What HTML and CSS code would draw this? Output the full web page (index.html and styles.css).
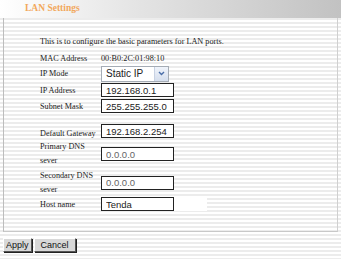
FILE: index.html
```html
<!DOCTYPE html>
<html lang="en">
<head>
    <meta charset="UTF-8">
    <title>LAN Settings</title>
    <link rel="stylesheet" href="styles.css">
</head>
<body>
    <div class="title-bar">LAN Settings</div>
    <div class="content">
        <p class="intro">This is to configure the basic parameters for LAN ports.</p>
        <table class="form">
            <tr class="row-mac">
                <td class="lbl">MAC Address</td>
                <td>00:B0:2C:01:98:10</td>
            </tr>
            <tr class="row-mode">
                <td class="lbl">IP Mode</td>
                <td>
                    <div class="select">
                        <span>Static IP</span>
                        <span class="arrow">
                            <svg width="11" height="11" viewBox="0 0 11 11"><path d="M3 4 L5.5 6.5 L8 4" fill="none" stroke="#4a6ea8" stroke-width="1.4"/></svg>
                        </span>
                    </div>
                </td>
            </tr>
            <tr class="row-std">
                <td class="lbl">IP Address</td>
                <td><input class="field" value="192.168.0.1"></td>
            </tr>
            <tr class="row-std">
                <td class="lbl">Subnet Mask</td>
                <td><input class="field" value="255.255.255.0"></td>
            </tr>
            <tr class="row-gw">
                <td class="lbl">Default Gateway</td>
                <td><input class="field" value="192.168.2.254"></td>
            </tr>
            <tr class="row-dns">
                <td class="lbl">Primary DNS<br>sever</td>
                <td><input class="field dim" value="0.0.0.0"></td>
            </tr>
            <tr class="row-dns2">
                <td class="lbl">Secondary DNS<br>sever</td>
                <td><input class="field dim" value="0.0.0.0"></td>
            </tr>
            <tr class="row-host">
                <td class="lbl">Host name</td>
                <td><div class="host-cell"><input class="field" value="Tenda"></div></td>
            </tr>
        </table>
    </div>
    <div class="footer">
        <button class="btn">Apply</button><button class="btn">Cancel</button>
    </div>
</body>
</html>
```

FILE: styles.css
```css
html, body {
    margin: 0;
    padding: 0;
}
body {
    width: 341px;
    height: 259px;
    overflow: hidden;
    font-family: "Liberation Serif", "Times New Roman", serif;
    font-size: 8.2px;
    color: #222;
    background: repeating-linear-gradient(to bottom, #ffffff 0, #ffffff 2px, #ececec 2px, #ececec 4px);
}
.title-bar {
    height: 18px;
    line-height: 17px;
    padding-left: 25px;
    font-weight: bold;
    font-size: 9.5px;
    color: #f2a85c;
    background: linear-gradient(to right, #ffffff 0%, #e4e4e4 40%, #c2c2c2 100%);
}
.content {
    margin-left: 3px;
    margin-right: 3px;
    height: 214px;
    border-left: 1px solid #bdbdbd;
    border-right: 1px solid #d0d0d0;
    border-bottom: 1px solid #c8c8c8;
    padding-left: 36px;
    box-sizing: border-box;
    overflow: hidden;
}
.intro {
    margin: 0;
    padding-top: 18px;
    height: 12px;
    line-height: 12px;
}
.form {
    border-collapse: collapse;
    table-layout: fixed;
    margin-top: 3px;
}
.form td {
    padding: 0;
    vertical-align: middle;
}
.form td.lbl {
    width: 61px;
    white-space: nowrap;
}
.row-mac td { height: 14px; }
.row-mode td { height: 17px; }
.row-std td { height: 16px; }
.row-gw td { height: 24px; vertical-align: bottom; padding-bottom: 2px; }
.row-dns td { height: 27px; line-height: 14px; }
.row-dns2 td { height: 29px; line-height: 14px; }
.row-host td { height: 14px; }
.field {
    width: 73px;
    height: 14px;
    box-sizing: border-box;
    border: 1px solid #222;
    padding: 0 0 0 4px;
    font-family: "Liberation Sans", Arial, sans-serif;
    font-size: 9.5px;
    color: #222;
    background: #fff;
    margin: 0;
    display: block;
}
.field.dim {
    color: #666;
}
.select {
    width: 68px;
    height: 16px;
    box-sizing: border-box;
    border: 1px solid #a5acb5;
    background: #fff;
    display: flex;
    align-items: center;
    justify-content: space-between;
    padding-left: 4px;
    font-family: "Liberation Sans", Arial, sans-serif;
    font-size: 10px;
}
.arrow {
    width: 13px;
    height: 14px;
    display: flex;
    align-items: center;
    justify-content: center;
    background: linear-gradient(to bottom, #f0f4fb, #d5deed);
    border-left: 1px solid #c8d2e3;
}
.host-cell {
    width: 106px;
    height: 14px;
    background: #fff;
}
.footer {
    padding: 6px 0 0 3px;
    display: flex;
    gap: 2px;
}
.btn {
    height: 14px;
    padding: 0 6px;
    font-family: "Liberation Sans", Arial, sans-serif;
    font-size: 9px;
    color: #111;
    background: #d8d8d8;
    border: 1px solid;
    border-color: #fff #555 #555 #fff;
    box-shadow: 1px 1px 0 #222;
}
.btn:first-child {
    padding: 0 2px;
}
```
